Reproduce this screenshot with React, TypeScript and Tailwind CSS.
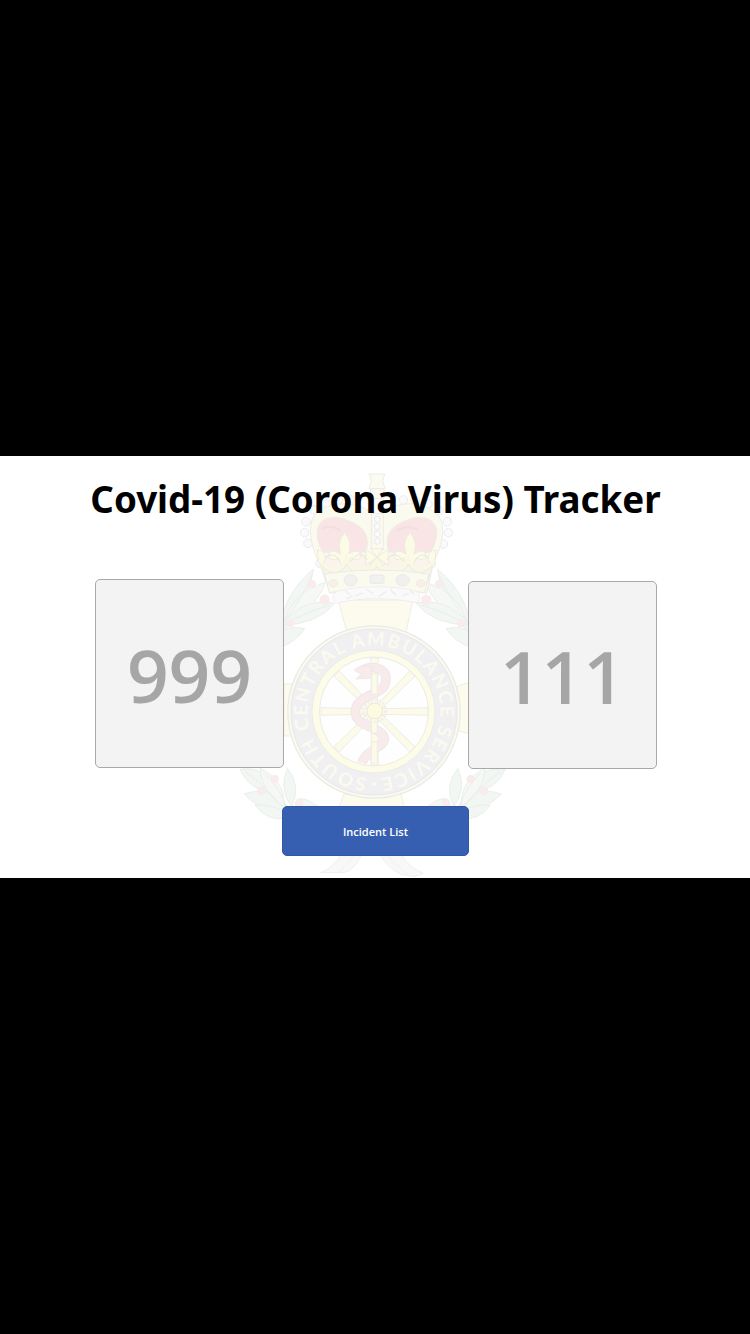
const SPOKES = [0, 45, 90, 135, 180, 225, 270, 315];

function Leaf({ d, tone = "#f3f7f3" }: { d: string; tone?: string }) {
  return <path d={d} fill={tone} stroke="#eaedea" strokeWidth="3" />;
}

function Berry({ x, y, r = 11 }: { x: number; y: number; r?: number }) {
  return <circle cx={x} cy={y} r={r} fill="#fbecec" stroke="#f3e8e9" strokeWidth="2" />;
}

function Crown() {
  return (
    <g transform="translate(230 450) scale(.3333)" stroke="#edece4" strokeWidth="3">
      <path d="M418 72h46l-6 22 8 22h-50l8-22z" fill="#fbfbf2" />
      <path d="M422 116h40v30h-40z" fill="#fbfbf2" />
      {[[362, 150], [326, 150], [288, 162], [252, 180], [228, 215], [224, 248], [234, 280], [270, 340], [520, 150], [556, 152], [594, 162], [628, 182], [652, 215], [655, 248], [640, 282], [604, 342]].map(
        ([x, y]) => (
          <circle key={`${x}-${y}`} cx={x} cy={y} r="13" fill="#fafafb" stroke="#ebebef" />
        ),
      )}
      <path
        d="M268 340C236 275 228 205 270 182C320 148 405 156 441 206C480 153 570 148 614 186C652 215 640 280 610 340L590 430Q440 405 300 430Z"
        fill="#fbfaef"
      />
      <path d="M262 240C268 200 315 195 350 210C385 224 415 240 412 285L408 305Q345 318 280 305Q258 275 262 240Z" fill="#f9e5e5" />
      <path d="M620 240C612 200 568 195 533 210C498 224 468 240 472 285L476 305Q540 318 602 305Q622 275 620 240Z" fill="#f9e5e5" />
      <path d="M274 238q28-18 56 4M500 242q32-20 66-2" fill="none" stroke="#f5dedf" strokeWidth="7" />
      <path d="M424 190h36v110h-36z" fill="#fafaef" />
      {[208, 230, 252, 274].map((y) => (
        <circle key={y} cx="442" cy={y} r="9" fill="#fbfbfc" stroke="#e8e8ed" />
      ))}
      <path d="M262 300L282 345C280 300 330 300 340 340C365 300 410 300 420 345C430 315 455 315 465 345C475 300 520 300 540 340C555 300 600 300 596 345L618 300L592 400H292Z" fill="#faf4ec" />
      {[344, 540].map((x) => (
        <path
          key={x}
          transform={`translate(${x} 300)`}
          d="M0-52Q-24-25-12 12Q-45-8-48 18Q-45 36-18 24L-10 45H12L18 24Q45 36 48 18Q45-8 12 12Q24-25 0-52Z"
          fill="#fbfbe6"
        />
      ))}
      <path d="M441 322l-34-24v48zM441 322l34-24v48zM441 322l-20 26h40zM441 322l-18-26h36z" fill="#fbfbe6" />
      <path d="M262 300q24 0 24 28q-8 20-20 14zM618 300q-24 0-24 28q8 20 20 14z" fill="#fbfbe6" />
      <path
        d="M270 335C300 375 335 365 348 328C360 370 420 372 440 338C460 372 520 370 535 328C550 365 585 370 610 335"
        fill="none"
        stroke="#f9f8e3"
        strokeWidth="12"
      />
      <path
        d="M272 343C302 382 335 372 350 343C365 377 420 380 440 350C462 380 520 377 535 343C550 372 585 378 606 345M285 325Q312 300 330 335M362 335Q388 295 412 330M470 330Q495 295 520 335M552 335Q575 300 597 325"
        fill="none"
        stroke="#e9e7e2"
      />
      <path d="M284 372Q440 348 596 372L584 428Q440 402 298 428Z" fill="#fbfaef" />
      <ellipse cx="362" cy="391" rx="20" ry="17" fill="#f0f1ef" stroke="#e9e9e5" />
      <rect x="420" y="375" width="42" height="25" rx="4" fill="#f0f1f0" stroke="#e9e9e5" />
      <ellipse cx="518" cy="391" rx="20" ry="17" fill="#f0f1ef" stroke="#e9e9e5" />
      <ellipse cx="310" cy="400" rx="13" ry="11" fill="#f8efec" />
      <ellipse cx="572" cy="400" rx="13" ry="11" fill="#f8efec" />
      <path
        d="M320 424Q380 408 440 410Q510 410 558 424Q580 440 562 458Q500 446 440 446Q375 446 320 460Q296 446 320 424Z"
        fill="#fafafa"
        stroke="#eeeeee"
      />
      <path d="M345 422l16 12M375 438l25-10M408 418l22 14M445 440l25-16M480 418l18 18M515 438l22-8M350 446l18-8M540 422l14 12" stroke="#efeff0" strokeWidth="5" />
    </g>
  );
}

function UpperLaurel() {
  return (
    <>
      <Leaf d="M150 560Q150 440 250 358Q240 440 150 560Z" />
      <Leaf d="M160 520Q190 425 285 398Q265 470 160 520Z" tone="#f5f8f5" />
      <Leaf d="M155 525Q220 440 315 460Q260 525 155 525Z" />
      <Leaf d="M150 548Q180 525 224 536Q200 575 150 592Z" />
      <path d="M160 515Q215 450 245 375M165 520Q230 485 300 465" fill="none" stroke="#eaedea" strokeWidth="3" />
      <Berry x={246} y={402} />
      <Berry x={284} y={449} r={14} />
      <Berry x={180} y={520} />
    </>
  );
}

function LowerLaurel() {
  return (
    <>
      <Leaf d="M30 238Q110 225 135 310Q55 300 30 238Z" />
      <Leaf d="M42 312Q120 285 175 355Q95 370 42 312Z" />
      <Leaf d="M90 235Q165 270 162 350Q95 310 90 235Z" tone="#f5f8f5" />
      <Leaf d="M75 345Q150 340 170 385Q110 395 75 345Z" />
      <Leaf d="M172 235Q215 285 185 350Q145 300 172 235Z" />
      <Leaf d="M195 345Q205 305 265 350L210 375Z" />
      <path d="M45 245Q110 290 155 350M105 250Q145 290 170 350" fill="none" stroke="#eaedea" strokeWidth="3" />
      <Berry x={134} y={267} />
      <Berry x={93} y={303} />
      <Berry x={208} y={337} />
    </>
  );
}

const SNAKE =
  "M361 672C367 664 386 667 386 678C386 689 379 691 373 694C361 699 353 706 356 716C360 727 380 727 384 737C387 747 366 749 362 763";

function Wheel() {
  return (
    <g>
      <path d="M338 600h75l-7 32h-59zM344 794h57l4 16h-67zM284 684h12v52h-12zM452 688l18-6v52l-18-5z" fill="#fdfbed" stroke="#efede6" />
      <circle cx="374" cy="712" r="86.2" fill="#fbfaef" stroke="#e9e9e6" strokeWidth="1.2" />
      <circle cx="374" cy="712" r="83" fill="#f0f0f3" stroke="#e8e8ea" />
      <circle cx="373.5" cy="711.5" r="61.5" fill="#fdfce8" stroke="#ebece5" />
      <circle cx="374" cy="711.5" r="54.5" fill="#fefefe" stroke="#ebebe6" />
      {SPOKES.map((angle) => (
        <path
          key={angle}
          transform={`rotate(${angle} 374.5 711.5)`}
          d="M371.7 704L370.7 658h7.6L377.3 704Z"
          fill="#fcfbea"
          stroke="#ebebe4"
          strokeWidth=".9"
        />
      ))}
      <path d={SNAKE} fill="none" stroke="#efe5e5" strokeWidth="9.5" />
      <path d={SNAKE} fill="none" stroke="#f7ebec" strokeWidth="7.8" />
      <path d="M372 666Q361 664 354 670L361 674L356 679L372 678Z" fill="#f7ebec" stroke="#efe5e5" strokeWidth=".8" />
      <path d="M371.7 674h5.6v20h-5.6zM371.7 716h5.6v17h-5.6zM371.7 742h5.6v21h-5.6z" fill="#fcfbea" stroke="#ebebe4" strokeWidth=".8" />
      <circle cx="374.5" cy="711" r="11" fill="none" stroke="#f2eee9" strokeWidth="3" strokeDasharray="2 2" />
      <circle cx="374.7" cy="711" r="7.8" fill="#fdfbdf" stroke="#ebeadc" />
      <path id="motto" d="M374 778.5a66.5 66.5 0 0 1 0-133a66.5 66.5 0 0 1 0 133" fill="none" />
      <text fill="#fbfaef" className="font-['Lato',sans-serif] text-[18.5px] font-bold">
        <textPath href="#motto" startOffset="7" textLength="403" lengthAdjust="spacing">
          SOUTH CENTRAL AMBULANCE SERVICE
        </textPath>
      </text>
      <circle cx="374" cy="784" r="2" fill="#fbfaef" />
    </g>
  );
}

function Crest() {
  return (
    <svg viewBox="0 456 750 422" className="absolute inset-0 h-full w-full blur-[0.4px]" aria-hidden="true">
      <g transform="translate(230 450) scale(.3333)">
        <UpperLaurel />
        <g transform="matrix(-1 0 0 1 873 0)">
          <UpperLaurel />
        </g>
      </g>
      <g transform="translate(230 690) scale(.3333)">
        <LowerLaurel />
        <g transform="matrix(-1 0 0 1 856 0)">
          <LowerLaurel />
        </g>
        <path d="M335 490L395 494Q370 545 340 548L272 548Q315 530 335 490Z" fill="#f7f8f7" stroke="#eeefee" strokeWidth="3" />
        <path d="M450 494L510 490Q540 535 580 550L552 560L510 552Q475 535 450 494Z" fill="#f7f8f7" stroke="#eeefee" strokeWidth="3" />
        <path d="M375 494L325 548M470 494Q500 530 535 555" fill="none" stroke="#f0f1f0" strokeWidth="3" />
      </g>
      <Wheel />
      <Crown />
    </svg>
  );
}

const CARD =
  "flex w-[189px] items-center justify-center rounded-[5px] border border-[#a9a9a9] bg-[#f3f3f3] text-[73px] leading-none font-semibold text-[#a6a6a6]";

export default function App() {
  return (
    <div className="flex h-[1334px] w-[750px] flex-col justify-center bg-black font-['Open_Sans',sans-serif]">
      <main className="relative h-[422px] w-full overflow-hidden bg-white">
        <Crest />
        <div className="relative flex h-full flex-col items-center">
          <h1 className="mt-[17px] ml-px font-['Noto_Sans','Open_Sans',sans-serif] text-[36.75px] leading-[52px] font-bold whitespace-nowrap text-black">
            Covid-19 (Corona Virus) Tracker
          </h1>
          <div className="mt-[54px] ml-[2px] flex w-[562px] items-start justify-between">
            <button className={`${CARD} h-[189px] pt-px`}>999</button>
            <button className={`${CARD} mt-[2px] h-[188px]`}>111</button>
          </div>
          <button className="mt-[37px] h-[50px] w-[187px] rounded-[5px] border border-[#3157a5] bg-[#375fb1] pt-[2px] pl-px text-[11px] font-semibold text-white">
            Incident List
          </button>
        </div>
      </main>
    </div>
  );
}
